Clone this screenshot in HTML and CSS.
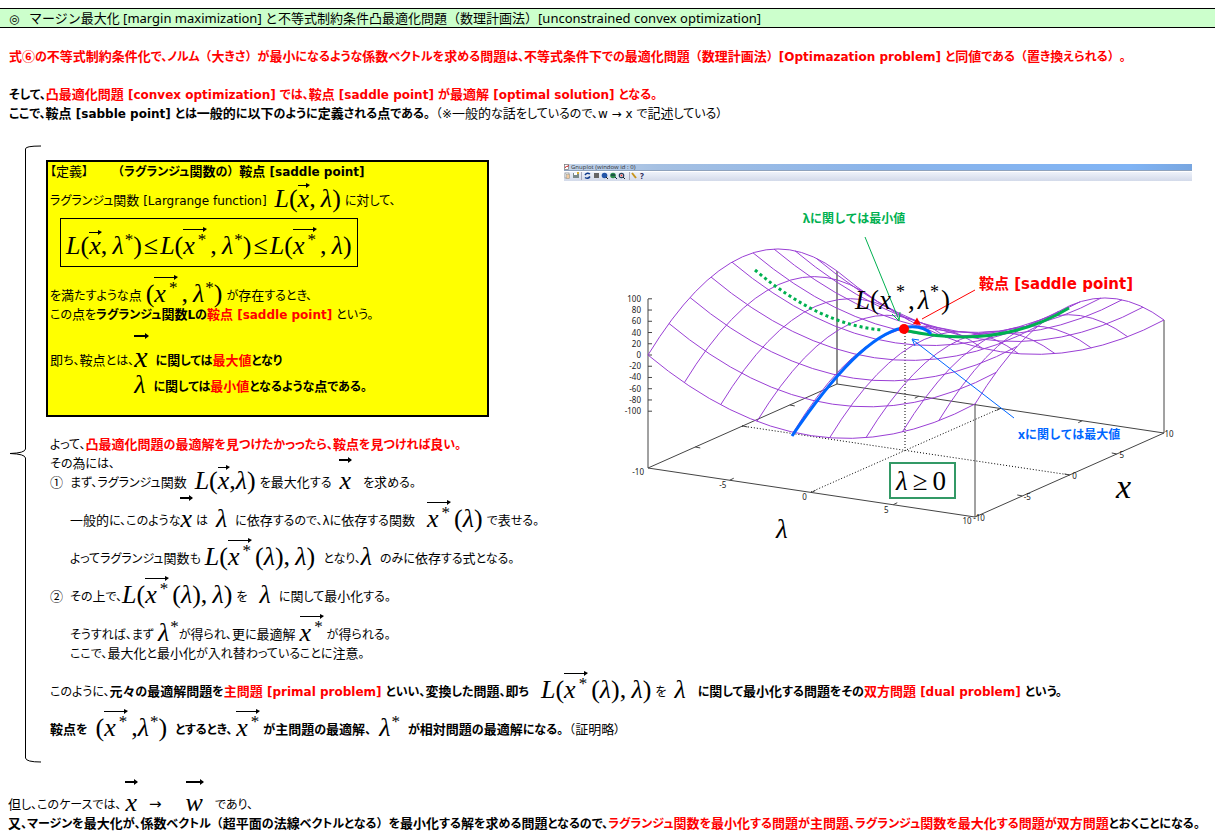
FILE: index.html
```html
<!DOCTYPE html>
<html lang="ja">
<head>
<meta charset="utf-8">
<title>マージン最大化と凸最適化問題</title>
<link rel="stylesheet" href="styles.css">
</head>
<body>
<h1 class="title"><span class="mark">◎</span>マージン最大化 [margin maximization] と不等式制約条件凸最適化問題<span class="fw">（</span>数理計画法<span class="fw">）</span>[unconstrained convex optimization]</h1>

<section class="intro">
  <p class="row b red">式⑥の不等式制約条件化で、ノルム<span class="fw">（</span>大きさ<span class="fw">）</span>が最小になるような係数ベクトルを求める問題は、不等式条件下での最適化問題<span class="fw">（</span>数理計画法<span class="fw">）</span>[Optimazation problem] と同値である<span class="fw">（</span>置き換えられる<span class="fw">）</span>。</p>
  <p class="row skip b">そして、<span class="red">凸最適化問題 [convex optimization] では、鞍点 [saddle point] が最適解 [optimal solution] となる。</span></p>
  <p class="row"><b>ここで、鞍点 [sabble point] とは一般的に以下のように定義される点である。</b><span class="fw">（</span>※一般的な話をしているので、w → x で記述している）</p>
</section>

<main class="group">
  <svg class="brace" viewBox="0 0 32 618" preserveAspectRatio="none" aria-hidden="true"><path d="M31 1 Q15 1 15.500 4 V304 Q15 308 0 308.500 Q15 309 15.500 313 V613 Q16 617 31 617"/></svg>
  <div class="body">
    <div class="split">
      <div class="left">
        <section class="def">
          <p class="row">【定義】<b class="g24"><span class="fw">（</span>ラグランジュ関数の<span class="fw">）</span>鞍点 [saddle point]</b></p>
          <p class="row d1">ラグランジュ関数 [Largrange function] <span class="math g4"><i>L</i>(<i class="vec">x</i>,&thinsp;<i>λ</i>)</span><span class="g4">に対して、</span></p>
          <p class="formula"><span class="math"><i>L</i>(<i class="vec">x</i>,&thinsp;<i>λ</i><sup>*</sup>)<span class="rel">≤</span><i>L</i>(<span class="vec star"><i>x</i><sup>*</sup></span>,&thinsp;<i>λ</i><sup>*</sup>)<span class="rel">≤</span><i>L</i>(<span class="vec star"><i>x</i><sup>*</sup></span>,&thinsp;<i>λ</i>)</span></p>
          <p class="row d2">を満たすような点<span class="math g4">(<span class="vec star"><i>x</i><sup>*</sup></span>,&thinsp;<i>λ</i><sup>*</sup>)</span><span class="g4">が存在するとき、</span></p>
          <p class="row">この点を<b>ラグランジュ関数Lの<span class="red">鞍点 [saddle point]</span></b><span class="g4">という。</span></p>
          <div class="point">
            <p class="row">即ち、鞍点とは、</p>
            <p class="row b"><span class="math big"><i class="vec high">x</i></span><span class="g8">に関しては<span class="red">最大値</span>となり</span></p>
            <p class="row b lam"><span class="math"><i>λ</i></span><span class="g8">に関しては<span class="red">最小値</span>となるような点である。</span></p>
          </div>
        </section>
        <section class="steps">
          <p class="row">よって、<b class="red">凸最適化問題の最適解を見つけたかっったら、鞍点を見つければ良い。</b></p>
          <p class="row">その為には、</p>
          <p class="row"><span class="num">①</span>まず、ラグランジュ関数<span class="math g8"><i>L</i>(<i class="vec">x</i>,<i>λ</i>)</span><span class="g4">を最大化する</span><span class="math g8"><i class="vec high">x</i></span><span class="g12">を求める。</span></p>
          <p class="row skip ind">一般的に、このような<span class="math"><i class="vec high">x</i></span><span class="g4">は</span><span class="math g8"><i>λ</i></span><span class="g8">に依存するので、λに依存する関数</span><span class="math g12"><span class="vec star"><i>x</i><sup>*</sup></span>(<i>λ</i>)</span><span class="g4">で表せる。</span></p>
          <p class="row skip ind">よってラグランジュ関数も<span class="math g4"><i>L</i>(<span class="vec star"><i>x</i><sup>*</sup></span>(<i>λ</i>),&thinsp;<i>λ</i>)</span><span class="g8">となり、</span><span class="math"><i>λ</i></span><span class="g8">のみに依存する式となる。</span></p>
          <p class="row skip"><span class="num">②</span>その上で、<span class="math"><i>L</i>(<span class="vec star"><i>x</i><sup>*</sup></span>(<i>λ</i>),&thinsp;<i>λ</i>)</span><span class="g4">を</span><span class="math g12"><i>λ</i></span><span class="g8">に関して最小化する。</span></p>
          <p class="row skip ind">そうすれば、まず<span class="math g4"><i>λ</i><sup>*</sup></span>が得られ、更に最適解<span class="math g4"><span class="vec star"><i>x</i><sup>*</sup></span></span>が得られる。</p>
          <p class="row ind">ここで、最大化と最小化が入れ替わっていることに注意。</p>
        </section>
      </div>
      <figure class="plot">
        <svg id="plot" viewBox="563 160 630 385" role="img" aria-label="鞍点の3次元プロット">
          <defs>
            <linearGradient id="bar" x1="0" x2="1" y1="0" y2="0"><stop offset="0" stop-color="#c3d5ec"/><stop offset=".15" stop-color="#a5c0e2"/><stop offset=".5" stop-color="#8ab4ea"/><stop offset=".9" stop-color="#80b4f5"/><stop offset="1" stop-color="#78a6e0"/></linearGradient>
            <linearGradient id="tools" x1="0" x2="0" y1="0" y2="1"><stop offset="0" stop-color="#eef2fa"/><stop offset="1" stop-color="#d3daea"/></linearGradient>
          </defs>
          <rect x="564" y="164" width="628" height="7" fill="url(#bar)"/>
          <path d="M564 170.500H1192" stroke="#8fa3bd"/>
          <rect x="564" y="172" width="628" height="9" fill="url(#tools)"/>
          <g class="icons">
            <rect x="564.500" y="164.500" width="4" height="5" fill="#fff" stroke="#777" stroke-width=".7"/><path d="M565 168l1.500-2 1 1 1-2" stroke="#c33"/>
            <rect x="565" y="173" width="4" height="5" fill="#fff" stroke="#888" stroke-width=".7"/><rect x="566.500" y="174.500" width="3" height="4" fill="#f3c9a0" stroke="#998" stroke-width=".5"/>
            <rect x="573" y="173" width="6" height="5" fill="#7b8a8a"/><rect x="574" y="173" width="3" height="2" fill="#fff"/><rect x="577" y="172" width="2" height="2" fill="#d8b030"/>
            <path d="M581.500 172v8M629.500 172v8" stroke="#aab"/>
            <path d="M585 175q2-3 5-1M590 176.500q-2 3-5 1" stroke="#123c8c" stroke-width="1.500"/>
            <rect x="594" y="173" width="5" height="5" fill="#666"/>
            <circle cx="604.500" cy="175.500" r="2.800" fill="#2456a8"/><path d="M606 177l2 2" stroke="#222"/>
            <circle cx="613" cy="175.500" r="2.800" fill="#2a8a4a"/><path d="M611 175h4M615 177l2 2" stroke="#124"/>
            <circle cx="621.500" cy="175.500" r="2.200" fill="#fff" stroke="#26415f" stroke-width="1.200"/><circle cx="621.500" cy="175.500" r="1" fill="#d33"/><path d="M623 177l2 2" stroke="#222"/>
            <path d="M632 173l4 5" stroke="#c8951d" stroke-width="2"/>
          </g>
          <text class="wtitle" x="571" y="169">Gnuplot (window id : 0)</text>
          <text class="help" x="640" y="179">?</text>
          <path class="wall" d="M837 271V384"/>
          <path class="axis" d="M648 299V468L975 517L1164 433L837 384L648 468M975 517V404M1164 433V320"/>
          <path class="guide" d="M811 492L1000 408.500M742 426L1070 475M905 330V450"/>
          <g id="ticks"></g>
          <g id="mesh"></g>
          <path class="dots" d="M755 270Q820 325 882 330"/>
          <path class="green" d="M908 331Q1000 350 1069 308"/>
          <path class="blue" d="M792 436Q858 338 902 328Q922 324 931 334"/>
          <circle cx="904" cy="329" r="5" fill="#f00"/>
          <g stroke="#00b050"><path class="lead" d="M865 237L899 320"/><path class="lead" d="M892 314L899 321L900 312"/></g>
          <path class="lead" stroke="#f00" d="M975 290L922 319"/><path d="M913 324L917 317.500L921 325Z" fill="#f00"/>
          <g stroke="#0066ff"><path class="lead" d="M1014 418L913 340M919 340L912 339L915 346"/></g>
          <text class="note" x="803" y="223" fill="#00b050">λに関しては最小値</text>
          <text class="note big" x="979" y="289" fill="#f00">鞍点 [saddle point]</text>
          <text class="note" x="1018" y="439" fill="#0066ff">xに関しては最大値</text>
          <text class="eq" x="855" y="309"><tspan class="it">L</tspan>(<tspan class="it">x</tspan></text>
          <text class="eq s" x="896" y="298">*</text>
          <text class="eq" x="908" y="309">,<tspan class="it" dx="3">λ</tspan></text>
          <text class="eq s" x="930" y="298">*</text>
          <text class="eq" x="941" y="309">)</text>
          <rect x="890" y="463" width="65" height="35" fill="#fff" stroke="#339966" stroke-width="2"/>
          <text class="eq" x="896" y="490"><tspan class="it">λ</tspan><tspan dx="5">≥</tspan><tspan dx="5">0</tspan></text>
          <text class="eq it" x="776" y="538">λ</text>
          <text class="eq it xl" x="1116" y="498">x</text>
        </svg>
      </figure>
    </div>
    <p class="row skip">このように、<b>元々の最適解問題を<span class="red">主問題 [primal problem]</span> といい、変換した問題、即ち</b><span class="math g12"><i>L</i>(<span class="vec star"><i>x</i><sup>*</sup></span>(<i>λ</i>),&thinsp;<i>λ</i>)</span><span class="g4">を</span><span class="math g8"><i>λ</i></span><b class="g12">に関して最小化する問題をその<span class="red">双方問題 [dual problem]</span> という。</b></p>
    <p class="row skip"><b>鞍点を</b><span class="math g8">(<span class="vec star"><i>x</i><sup>*</sup></span>,<i>λ</i><sup>*</sup>)</span><b class="g8">とするとき、</b><span class="math g4"><span class="vec star"><i>x</i><sup>*</sup></span></span><b>が主問題の最適解、</b><span class="math g8"><i>λ</i><sup>*</sup></span><b class="g8">が相対問題の最適解になる。</b><span class="fw">（</span>証明略）</p>
  </div>
</main>

<footer class="end">
  <p class="row">但し、このケースでは、<span class="math g4"><i class="vec high">x</i></span><span class="g12 arrow">→</span><span class="math g24"><i class="vec high">w</i></span><span class="g12">であり、</span></p>
  <p class="row b">又、マージンを最大化が、係数ベクトル<span class="fw">（</span>超平面の法線ベクトルとなる<span class="fw">）</span>を最小化する解を求める問題となるので、<span class="red">ラグランジュ関数を最小化する問題が主問題、ラグランジュ関数を最大化する問題が双方問題</span>とおくことになる。</p>
</footer>
<script src="plot.js"></script>
</body>
</html>
```
FILE: styles.css
```css
* { box-sizing: border-box; }
body {
  margin: 0;
  padding-top: 8px;
  background: #fff;
  color: #000;
  font: 12px/19px "DejaVu Sans", "Noto Sans CJK JP", sans-serif;
  font-feature-settings: "palt";
  text-spacing-trim: space-all;
}
p, h1, figure { margin: 0; }
.title {
  border: solid #000;
  border-width: 1px 0;
  background: #ccffcc;
  padding-left: 9px;
  font: 400 13px/18px "Noto Sans", "Noto Sans CJK JP", sans-serif;
  white-space: nowrap;
}
.mark { display: inline-block; width: 20px; font: 12px/12px "DejaVu Sans", sans-serif; }
.kanji { font-family: "Noto Sans CJK JP", sans-serif; font-size: 13px; line-height: 12px; }
.arrow { font-size: 15px; line-height: 12px; }
.fw { font-feature-settings: normal; }
.b, b { font-weight: 700; }
.red { color: #f00; }
.row { white-space: nowrap; min-height: 19px; }
.skip { margin-top: 19px; }
.intro { padding: 20px 0 0 9px; }
.g4 { margin-left: 4px; }
.g8 { margin-left: 8px; }
.g12 { margin-left: 12px; }
.g24 { margin-left: 24px; }

.math {
  display: inline-block;
  margin-top: -8px;
  margin-bottom: -12px;
  vertical-align: -2px;
  font: 26px/26px "Liberation Serif", serif;
  font-feature-settings: normal;
}
.math.big { font-size: 30px; }
.math sup { font-size: 17px; line-height: 0; vertical-align: 9px; margin-left: 1px; }
.rel { margin: 0 2px; }
.vec { position: relative; display: inline-block; line-height: 26px; }
.vec::before {
  content: "";
  position: absolute;
  left: 0;
  right: 0;
  top: -1px;
  border-top: 1px solid #000;
}
.vec::after {
  content: "";
  position: absolute;
  right: -1px;
  top: -3px;
  border: solid transparent;
  border-width: 2px 0 3px 4px;
  border-left-color: #000;
}
.star { margin-right: 4px; }
.star sup { margin-left: 3px; }
.star::before { top: -4px; }
.star::after { top: -6px; }
.high::before { top: -9px; border-top-width: 2px; }
.high::after { top: -11px; border-width: 3px 0 3px 4px; }

.group { display: flex; margin-top: 21px; padding-left: 10px; }
.brace { flex: none; width: 32px; height: 618px; overflow: visible; }
.brace path { fill: none; stroke: #000; stroke-width: 1; }
.body { flex: 1; min-width: 0; padding: 15px 0 0 4px; }
.body > .row, .steps { padding-left: 4px; }
.split { display: flex; gap: 74px; }
.left { flex: none; width: 443px; }
.plot { flex: 1; min-width: 0; padding-right: 22px; }
.plot svg { display: block; width: 100%; }

.def { border: 2px solid #000; background: #ff0; padding: 1px 0 18px 2px; }
.d1 { margin-top: 10px; }
.d2 { margin-top: 20px; }
.formula {
  width: max-content;
  margin: 7px 0 0 10px;
  border: 1px solid #000;
  padding: 14px 5px 7px;
}
.formula .math { display: block; margin: 0; white-space: nowrap; }
.point { display: grid; grid-template-columns: max-content 1fr; margin-top: 27px; }
.lam { grid-column: 2; margin-top: 7px; }
.steps { padding-top: 19px; }
.num { display: inline-block; width: 20px; }
.ind { padding-left: 20px; }
.end { padding: 33px 0 0 8px; }

#mesh path { fill: none; stroke: #9a3fd5; stroke-width: 1; }
.axis, .tick { fill: none; stroke: #444; stroke-width: 1; }
.wall { stroke: #8c8c8c; stroke-width: 2; }
.guide { fill: none; stroke: #000; stroke-width: 1; stroke-dasharray: 1 2; }
.dots { fill: none; stroke: #00b050; stroke-width: 3; stroke-dasharray: 3 3; }
.green { fill: none; stroke: #00b050; stroke-width: 3; }
.blue { fill: none; stroke: #0066ff; stroke-width: 3; }
.lead { fill: none; stroke-width: 1; }
.icons path { fill: none; }
.wtitle { font: 6px "Open Sans", sans-serif; fill: #333; }
.help { font: 700 8px "Noto Sans", sans-serif; fill: #225; }
.tlabel { font: 8px "Noto Sans", sans-serif; fill: #222; }
.note { font: 700 12px "Noto Sans", "Noto Sans CJK JP", sans-serif; }
.note.big { font: 700 15px "DejaVu Sans", "Noto Sans CJK JP", sans-serif; }
.eq { font: 27px "Liberation Serif", serif; }
.eq.s { font-size: 18px; }
.it { font-style: italic; }
.eq.xl { font-size: 34px; }
```
FILE: plot.js
```js
/* Set kanji and circled numbers one pixel larger than the kana and Latin text round them. */
document.querySelectorAll(".row").forEach(row => {
  const walker = document.createTreeWalker(row, NodeFilter.SHOW_TEXT);
  const nodes = [];
  while (walker.nextNode()) nodes.push(walker.currentNode);
  nodes.forEach(node => {
    const parts = node.data.split(/([\u4e00-\u9fff々①②⑥]+)/);
    if (parts.length < 2) return;
    node.replaceWith(...parts.filter(Boolean).map(part => {
      if (!/[\u4e00-\u9fff々①②⑥]/.test(part)) return part;
      const span = document.createElement("span");
      span.className = "kanji";
      span.textContent = part;
      return span;
    }));
  });
});

const NS = "http://www.w3.org/2000/svg";
const N = 9;

/* Projection of (lambda, x, z); z = 0 lies 113px above the base plane. */
function project(l, x, z) {
  const u = (l + 10) / 20, v = (x + 10) / 20;
  return [648 + 327 * u + 189 * v, 468 + 49 * u - 84 * v - 113 - 0.562 * z];
}
function add(parent, tag, attrs, text) {
  const el = document.createElementNS(NS, tag);
  for (const k in attrs) el.setAttribute(k, attrs[k]);
  if (text !== undefined) el.textContent = text;
  parent.appendChild(el);
}
/* A parabola is an exact quadratic curve: its control point follows from the midpoint. */
function curve(a, m, b) {
  const c = [0, 1].map(i => 2 * m[i] - (a[i] + b[i]) / 2);
  return `M${a}Q${c} ${b}`;
}
const f = (l, x) => project(l, x, l * l - x * x);
const mesh = document.getElementById("mesh");
for (let i = 0; i <= N; i++) {
  const t = -10 + 20 * i / N;
  add(mesh, "path", { d: curve(f(-10, t), f(0, t), f(10, t)) });
  add(mesh, "path", { d: curve(f(t, -10), f(t, 0), f(t, 10)) });
}
const ticks = document.getElementById("ticks");
for (let z = -100; z <= 100; z += 20) {
  const y = 355 - 0.562 * z;
  add(ticks, "path", { class: "tick", d: `M648 ${y}h4` });
  add(ticks, "text", { class: "tlabel", x: 641, y: y + 3, "text-anchor": "end" }, z);
}
for (let t = -5; t <= 5; t += 5) {
  const a = project(t, -10, -201), c = project(t, 10, -201);
  const b = project(10, t, -201), d = project(-10, t, -201);
  add(ticks, "path", { class: "tick", d: `M${a}l4 -2M${c}l-4 2M${b}l-5 -1M${d}l5 1` });
  add(ticks, "text", { class: "tlabel", x: a[0] - 7, y: a[1] + 8, "text-anchor": "middle" }, t);
  add(ticks, "text", { class: "tlabel", x: b[0] + 5, y: b[1] + 4, "text-anchor": "middle" }, t);
}
[["-10", 644, 475], ["10", 967, 524], ["-10", 979, 521], ["10", 1169, 437]].forEach(([s, x, y]) =>
  add(ticks, "text", { class: "tlabel", x, y, "text-anchor": s === "-10" && x < 700 ? "end" : "middle" }, s));
```
